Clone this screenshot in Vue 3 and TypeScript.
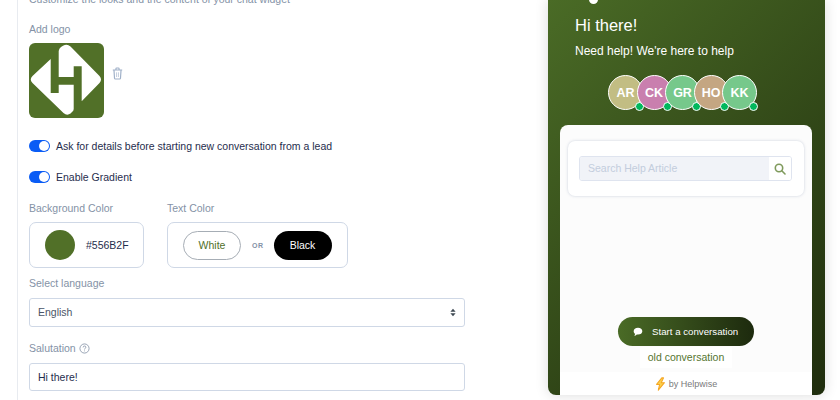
<template>
  <div class="page">
    <section class="settings">
      <p class="intro">Customize the looks and the content of your chat widget</p>

      <div class="field-label logo-label">Add logo</div>
      <div class="logo-row">
        <svg class="logo" viewBox="0 0 75 75">
          <rect width="75" height="75" rx="6" fill="#517028" />
          <path
            d="M29.700 8Q30 5.500 32 4L34 2.800Q38 0.500 41.500 3.500L70.500 33Q73.500 36.700 70.500 40L52.700 58.300V23.300H44.700V34H29.700Z"
            fill="#fff"
          />
          <path
            d="M44.700 41.700V66Q44.700 68 43 69L41.500 70.500Q38 73 34.500 70L3.500 40Q0 36.700 3.500 33L21.700 16V50H29.700V41.700Z"
            fill="#fff"
          />
        </svg>
        <svg class="trash" viewBox="0 0 14 16" fill="none" stroke="#9fb0c8" stroke-width="1.5">
          <path d="M1 3.500H13M5 3.500V2Q5 1 6 1H8Q9 1 9 2V3.500M2.500 3.500L3.200 14Q3.300 15 4.300 15H9.700Q10.700 15 10.800 14L11.500 3.500" />
          <path d="M5.800 6.500V12.500M8.200 6.500V12.500" stroke-width="0.8" />
        </svg>
      </div>

      <div class="toggle-row first">
        <span class="toggle"><span class="knob"></span></span>
        <span>Ask for details before starting new conversation from a lead</span>
      </div>
      <div class="toggle-row">
        <span class="toggle"><span class="knob"></span></span>
        <span>Enable Gradient</span>
      </div>

      <div class="colors">
        <div>
          <div class="field-label">Background Color</div>
          <div class="color-box bg-box">
            <span class="swatch"></span>
            <span class="hex">#556B2F</span>
          </div>
        </div>
        <div>
          <div class="field-label">Text Color</div>
          <div class="color-box text-box">
            <span class="pill white">White</span>
            <span class="or">OR</span>
            <span class="pill black">Black</span>
          </div>
        </div>
      </div>

      <div class="field-label lang-label">Select language</div>
      <div class="input select">
        <span>English</span>
        <svg class="updown" viewBox="0 0 8 12" fill="#3d4852">
          <path d="M4 1L7.500 5H0.500ZM4 11L0.500 7H7.500Z" />
        </svg>
      </div>

      <div class="field-label salutation">
        Salutation
        <svg class="help" viewBox="0 0 12 12" fill="none" stroke="#8492a6" stroke-width="0.9">
          <circle cx="6" cy="6" r="5" />
          <path d="M4.500 4.800Q4.500 3.300 6 3.300Q7.500 3.300 7.500 4.600Q7.500 5.400 6.700 5.800Q6 6.200 6 7.100" />
          <path d="M6 8.200V9.100" />
        </svg>
      </div>
      <div class="input hi">Hi there!</div>
    </section>

    <aside class="preview">
      <div class="widget">
        <span class="top-dot"></span>
        <h1>Hi there!</h1>
        <p class="need">Need help! We're here to help</p>
        <div class="avatars">
          <span
            v-for="a in agents"
            :key="a.name"
            class="avatar"
            :style="{ background: a.color }"
          >
            {{ a.name }}<i class="online"></i>
          </span>
        </div>
        <div class="body">
          <div class="search-card">
            <div class="search">
              <span class="placeholder">Search Help Article</span>
              <span class="search-btn">
                <svg viewBox="0 0 12 12" fill="none" stroke="#7f9a5c" stroke-width="1.6">
                  <circle cx="5" cy="5" r="3.700" />
                  <path d="M7.800 7.800L11 11" stroke-linecap="round" />
                </svg>
              </span>
            </div>
          </div>
          <div class="actions">
            <div class="start">
              <svg viewBox="0 0 12 11" fill="#fff">
                <path d="M6 0.500C9 0.500 11.200 2.200 11.200 4.500C11.200 6.800 9 8.500 6 8.500C5.500 8.500 5 8.450 4.600 8.350C3.800 9.200 2.700 9.800 1.500 9.900C2.100 9.300 2.500 8.500 2.600 7.700C1.500 7 0.800 5.800 0.800 4.500C0.800 2.200 3 0.500 6 0.500Z" />
              </svg>
              <span>Start a conversation</span>
            </div>
            <div class="old">old conversation</div>
          </div>
          <div class="powered">
            <svg viewBox="0 0 12 16" fill="#fbd24e" stroke="#f5a623" stroke-width="1.200" stroke-linejoin="round">
              <path d="M7.500 1L1.500 8.500H5L3.500 15L10.500 6.500H6.800L9.500 1Z" />
            </svg>
            <span>by Helpwise</span>
          </div>
        </div>
      </div>
    </aside>
  </div>
</template>

<script setup lang="ts">
interface Agent {
  name: string;
  color: string;
}

const agents: Agent[] = [
  { name: 'AR', color: '#c2bd83' },
  { name: 'CK', color: '#c97fae' },
  { name: 'GR', color: '#76c88b' },
  { name: 'HO', color: '#c4a682' },
  { name: 'KK', color: '#76c88b' },
];
</script>

<style>
html,
body {
  margin: 0;
  background: #fff;
}
</style>

<style scoped>
.page {
  width: 840px;
  height: 400px;
  overflow: hidden;
  display: flex;
  font-family: "Liberation Sans", Arial, sans-serif;
  font-size: 10.500px;
  color: #1f2d4d;
  background: #fff;
}

.settings {
  width: 448px;
  height: 400px;
  flex-shrink: 0;
  margin-left: 17px;
  padding: 0 0 0 11px;
  border-left: 1px solid #e8ebf0;
  box-sizing: border-box;
  overflow: hidden;
}

.intro {
  margin: -7px 0 0;
  height: 13px;
  line-height: 13px;
  color: #8492a6;
}

.field-label {
  color: #8492a6;
  line-height: 13px;
}

.logo-label {
  margin-top: 17px;
}

.logo-row {
  margin-top: 7px;
  display: flex;
  align-items: center;
  gap: 8px;
}

.logo {
  width: 75px;
  height: 75px;
  display: block;
}

.trash {
  width: 11px;
  height: 13px;
  margin-top: -14px;
}

.toggle-row {
  display: flex;
  align-items: center;
  gap: 6px;
  height: 14px;
  margin-top: 17px;
}

.toggle-row.first {
  margin-top: 21px;
}

.toggle {
  width: 21px;
  height: 12px;
  border-radius: 6px;
  background: #0a5cf5;
  position: relative;
  flex-shrink: 0;
}

.knob {
  position: absolute;
  right: 1px;
  top: 1px;
  width: 10px;
  height: 10px;
  border-radius: 50%;
  background: #fff;
}

.colors {
  display: flex;
  gap: 23px;
  margin-top: 18px;
}

.color-box {
  margin-top: 7px;
  height: 46px;
  border: 1px solid #cfd8e6;
  border-radius: 7px;
  box-sizing: border-box;
  display: flex;
  align-items: center;
}

.bg-box {
  width: 115px;
  padding-left: 15px;
  gap: 11px;
}

.swatch {
  width: 30px;
  height: 30px;
  border-radius: 50%;
  background: #517028;
}

.text-box {
  width: 181px;
  padding-left: 15px;
}

.pill {
  width: 58px;
  height: 29px;
  border-radius: 15px;
  box-sizing: border-box;
  display: flex;
  align-items: center;
  justify-content: center;
}

.pill.white {
  border: 1px solid #a6adb5;
  color: #517028;
}

.pill.black {
  background: #000;
  color: #fff;
}

.or {
  margin: 0 10px 0 11px;
  font-size: 7px;
  font-weight: 700;
  letter-spacing: 0.5px;
  color: #8492a6;
}

.lang-label {
  margin-top: 9px;
}

.input {
  width: 436px;
  height: 28.500px;
  border: 1px solid #cfd8e6;
  border-radius: 3px;
  box-sizing: border-box;
  padding: 0 8px;
  display: flex;
  align-items: center;
  justify-content: space-between;
}

.select {
  margin-top: 8px;
  color: #4a5568;
}

.updown {
  width: 6px;
  height: 9px;
}

.salutation {
  margin-top: 15px;
  display: flex;
  align-items: center;
  gap: 3px;
}

.help {
  width: 11px;
  height: 11px;
}

.hi {
  margin-top: 8px;
}

.preview {
  flex: 1;
  padding-left: 83px;
}

.widget {
  width: 277px;
  height: 395px;
  border-radius: 0 0 8px 8px;
  background: linear-gradient(135deg, #4a6b26 0%, #1f2d0d 100%);
  box-shadow: 0 0 14px rgba(0, 0, 0, 0.14);
  position: relative;
  display: flex;
  flex-direction: column;
  color: #fff;
}

.top-dot {
  position: absolute;
  left: 41px;
  top: -5px;
  width: 9px;
  height: 9px;
  border-radius: 50%;
  background: #fff;
}

h1 {
  margin: 15px 0 0 27px;
  font-size: 16.500px;
  font-weight: 400;
  line-height: 20px;
}

.need {
  margin: 9px 0 0 27px;
  font-size: 12px;
  line-height: 14px;
}

.avatars {
  display: flex;
  margin: 17px 0 0 60px;
}

.avatar {
  width: 35px;
  height: 35px;
  flex-shrink: 0;
  margin-right: -6.500px;
  border: 1.500px solid #fff;
  border-radius: 50%;
  box-sizing: border-box;
  position: relative;
  display: flex;
  align-items: center;
  justify-content: center;
  font-size: 12.500px;
  font-weight: 700;
  color: #fff;
}

.online {
  position: absolute;
  right: -1.500px;
  bottom: -1.500px;
  width: 7px;
  height: 7px;
  border: 1px solid #fff;
  border-radius: 50%;
  background: #00b85c;
}

.body {
  margin: 15px 13px 0 12px;
  flex: 1;
  border-radius: 8px 8px 0 0;
  background: #fcfcfc;
  display: flex;
  flex-direction: column;
  min-height: 0;
}

.search-card {
  margin: 16px 8px 0;
  height: 55px;
  padding: 15px 12px 15px 11px;
  box-sizing: border-box;
  border-radius: 7px;
  background: #fff;
  box-shadow: 0 0 3px rgba(90, 110, 150, 0.3);
}

.search {
  height: 25px;
  border: 1px solid #dfe4ef;
  border-radius: 3px;
  box-sizing: border-box;
  display: flex;
  align-items: stretch;
  overflow: hidden;
}

.placeholder {
  flex: 1;
  background: #f1f3f8;
  color: #c3cddd;
  padding-left: 8px;
  line-height: 23px;
}

.search-btn {
  width: 22px;
  display: flex;
  align-items: center;
  justify-content: center;
  background: #fff;
}

.search-btn svg {
  width: 12px;
  height: 12px;
}

.actions {
  margin-top: auto;
  display: flex;
  flex-direction: column;
  align-items: center;
}

.start {
  width: 136px;
  height: 29px;
  border-radius: 15px;
  box-sizing: border-box;
  padding-left: 15px;
  background: linear-gradient(90deg, #4a6b26 0%, #1d2a0e 100%);
  display: flex;
  align-items: center;
  gap: 9px;
  font-size: 9.700px;
  color: #fff;
}

.start svg {
  width: 10px;
  height: 10px;
}

.old {
  margin: 1px 0 4px;
  padding: 4px 8px;
  font-size: 10.500px;
  line-height: 13px;
  color: #557530;
  background: #fff;
}

.powered {
  height: 23px;
  background: #fff;
  display: flex;
  align-items: center;
  justify-content: center;
  gap: 3px;
  font-size: 9px;
  color: #7a7a7a;
}

.powered svg {
  width: 11px;
  height: 14px;
}
</style>
